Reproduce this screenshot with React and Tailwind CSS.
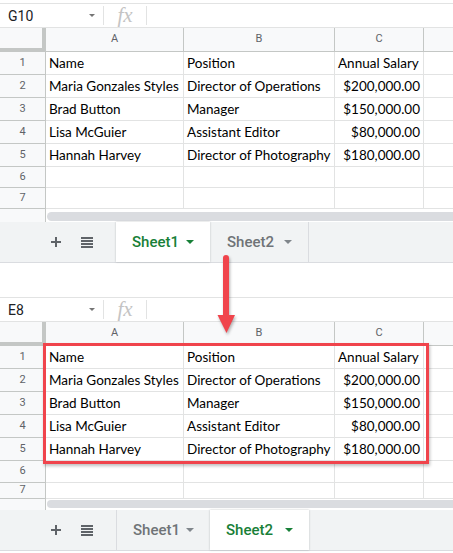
import React from "react";

const DATA = [
  ["Name", "Position", "Annual Salary"],
  ["Maria Gonzales Styles", "Director of Operations", "$200,000.00"],
  ["Brad Button", "Manager", "$150,000.00"],
  ["Lisa McGuier", "Assistant Editor", "$80,000.00"],
  ["Hannah Harvey", "Director of Photography", "$180,000.00"],
  ["", "", ""],
  ["", "", ""],
];

function FormulaBar({ name }) {
  return (
    <div className="flex h-[25px] items-center border-y border-[#e2e3e3] bg-white">
      <div className="flex w-[103px] items-center pl-[8px] pr-[8px]">
        <span className="font-['Roboto'] text-[14px] leading-none text-[#202124]">{name}</span>
        <svg className="ml-auto" width="6" height="3" viewBox="0 0 6 3">
          <path d="M0 0h6L3 3z" fill="#757575" />
        </svg>
      </div>
      <div className="h-[19px] w-px bg-[#e2e3e3]" />
      <div className="flex w-[42px] justify-center">
        <span className="font-['Liberation_Serif'] text-[21px] italic leading-none text-[#c4c4c4]">fx</span>
      </div>
      <div className="h-[19px] w-px bg-[#e2e3e3]" />
    </div>
  );
}

function HeaderRow() {
  return (
    <div className="flex h-[24px] bg-[#f8f9fa] font-['Roboto'] text-[11px] text-[#5f6368]">
      <div className="w-[46px] shrink-0 border-b-4 border-r-4 border-[#c4c7c5]" />
      <div className="flex w-[138px] shrink-0 items-center justify-center border-b border-r border-[#c4c7c5]">A</div>
      <div className="flex w-[151px] shrink-0 items-center justify-center border-b border-r border-[#c4c7c5]">B</div>
      <div className="flex w-[89px] shrink-0 items-center justify-center border-b border-r border-[#c4c7c5]">C</div>
      <div className="flex-1 border-b border-[#c4c7c5]" />
    </div>
  );
}

function DataRow({ idx, cells, height }) {
  const numeric = idx > 0;
  return (
    <div className="flex" style={{ height }}>
      <div className="flex w-[46px] shrink-0 items-center justify-center border-b border-r border-[#c4c7c5] bg-[#f8f9fa] font-['Roboto'] text-[11px] text-[#5f6368]">
        {idx + 1}
      </div>
      <div className="flex w-[138px] shrink-0 items-end overflow-hidden whitespace-nowrap border-b border-r border-[#e2e3e3] px-[3px] pb-[2px] font-['Lato'] text-[13.5px] leading-[17px] text-black">
        {cells[0]}
      </div>
      <div className="flex w-[151px] shrink-0 items-end overflow-hidden whitespace-nowrap border-b border-r border-[#e2e3e3] px-[3px] pb-[2px] font-['Lato'] text-[13.5px] leading-[17px] text-black">
        {cells[1]}
      </div>
      <div
        className={
          "flex w-[89px] shrink-0 items-end overflow-hidden whitespace-nowrap border-b border-r border-[#e2e3e3] px-[3px] pb-[2px] font-['Lato'] text-[13.5px] leading-[17px] text-black " +
          (numeric ? "justify-end" : "justify-start")
        }
      >
        {cells[2]}
      </div>
      <div className="flex-1 border-b border-[#e2e3e3]" />
    </div>
  );
}

function Caret({ color }) {
  return (
    <svg width="8" height="4" viewBox="0 0 8 4">
      <path d="M0 0h8L4 4z" fill={color} />
    </svg>
  );
}

function TabBar({ active }) {
  const tab = (label, isActive, width, extra) => (
    <div
      className={
        "flex h-full shrink-0 items-center pl-[16px] pr-[16px] font-['Roboto'] text-[15px] font-medium " +
        (isActive
          ? "bg-white text-[#188038] shadow-[0_0_2px_rgba(60,64,67,0.3)]"
          : "text-[#6f7377] " + extra)
      }
      style={{ width }}
    >
      <span>{label}</span>
      <span className="ml-auto flex">
        <Caret color={isActive ? "#188038" : "#80868b"} />
      </span>
    </div>
  );
  return (
    <div className="flex h-[41px] items-center border-b border-[#dadce0] bg-[#f1f3f4]">
      <div className="ml-[51px] flex">
        <svg width="10" height="10" viewBox="0 0 10 10">
          <path d="M4 0h2v4h4v2H6v4H4V6H0V4h4z" fill="#5f6368" />
        </svg>
      </div>
      <div className="ml-[20px] flex">
        <svg width="12" height="11" viewBox="0 0 12 11">
          <rect x="0" y="0" width="12" height="2" fill="#5f6368" />
          <rect x="0" y="3" width="12" height="2" fill="#5f6368" />
          <rect x="0" y="6" width="12" height="2" fill="#5f6368" />
          <rect x="0" y="9" width="12" height="2" fill="#5f6368" />
        </svg>
      </div>
      <div className="ml-[23px] flex h-full">
        {tab("Sheet1", active === 1, 94, "border-l border-[#dadce0]")}
        {tab("Sheet2", active === 2, 99, "border-r border-[#dadce0] pl-[17px]")}
      </div>
    </div>
  );
}

function ScrollArea({ height, barTop, barHeight }) {
  return (
    <div className="flex" style={{ height }}>
      <div className="w-[46px] shrink-0 border-r border-[#c4c7c5] bg-[#f8f9fa]" />
      <div className="flex-1 bg-white pl-[1px]" style={{ paddingTop: barTop }}>
        <div className="rounded-l-full bg-[#dadce0]" style={{ height: barHeight }} />
      </div>
    </div>
  );
}

function Sheet({ name, active, rowHeights, scroll }) {
  return (
    <div className="bg-white">
      <FormulaBar name={name} />
      <HeaderRow />
      {DATA.map((cells, i) => (
        <DataRow key={i} idx={i} cells={cells} height={rowHeights[i]} />
      ))}
      <ScrollArea height={scroll.h} barTop={scroll.top} barHeight={scroll.bar} />
      <TabBar active={active} />
    </div>
  );
}

export default function App() {
  return (
    <div className="relative h-[553px] w-[453px] overflow-hidden bg-white">
      <div className="pt-[3px]">
        <Sheet
          name="G10"
          active={1}
          rowHeights={[23, 23, 23, 23, 23, 21, 21]}
          scroll={{ h: 13, top: 3, bar: 9 }}
        />
        <div className="h-[34px] bg-white" />
        <Sheet
          name="E8"
          active={2}
          rowHeights={[23, 23, 23, 23, 23, 22, 16]}
          scroll={{ h: 11, top: 1, bar: 8 }}
        />
      </div>

      {/* highlight box */}
      <div className="pointer-events-none absolute left-[43px] top-[343px] h-[121px] w-[386px] border-[3px] border-[#f0444c] shadow-[1px_2px_3px_rgba(0,0,0,0.25)]" />

      {/* arrow */}
      <svg
        className="pointer-events-none absolute left-[212px] top-[252px]"
        width="30"
        height="86"
        viewBox="0 0 30 86"
        style={{ filter: "drop-shadow(1px 2px 1.5px rgba(0,0,0,0.3))" }}
      >
        <path
          d="M11 6 a3 3 0 0 1 6 0 V63 H23 L14.5 81 L5.5 63 H11 Z"
          fill="#f0444c"
        />
      </svg>
    </div>
  );
}
